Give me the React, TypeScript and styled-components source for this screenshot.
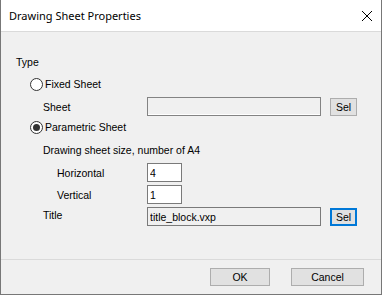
import styled, { createGlobalStyle } from 'styled-components';

const Global = createGlobalStyle`
    html, body {
        margin: 0;
        padding: 0;
        background: #ffffff;
    }
    * {
        box-sizing: border-box;
    }
`;

function CloseIcon() {
    return (
        <svg width="12" height="12" viewBox="0 0 12 12">
            <path d="M1 1 L11 11 M11 1 L1 11" stroke="#000" strokeWidth="1" fill="none" />
        </svg>
    );
}

type RowProps = { $top: number; $indent: number; $h?: number };

function App() {
    return (
        <>
            <Global />
            <Window>
                <TitleBar>
                    <span>Drawing Sheet Properties</span>
                    <CloseBtn>
                        <CloseIcon />
                    </CloseBtn>
                </TitleBar>
                <Body>
                    <Row $top={23} $indent={15}>
                        <Text>Type</Text>
                    </Row>
                    <Row $top={8} $indent={29}>
                        <Radio />
                        <RadioLabel>Fixed Sheet</RadioLabel>
                    </Row>
                    <Row $top={6} $indent={42} $h={19}>
                        <Label $w={104}>Sheet</Label>
                        <Field $w={174} $disabled value="" readOnly />
                        <SelButton $focused={false}>Sel</SelButton>
                    </Row>
                    <Row $top={4} $indent={29}>
                        <Radio $checked />
                        <RadioLabel>Parametric Sheet</RadioLabel>
                    </Row>
                    <Row $top={9} $indent={42}>
                        <Text>Drawing sheet size, number of A4</Text>
                    </Row>
                    <Row $top={6} $indent={56} $h={19}>
                        <Label $w={90}>Horizontal</Label>
                        <Field $w={35} value="4" readOnly />
                    </Row>
                    <Row $top={3} $indent={56} $h={19}>
                        <Label $w={90}>Vertical</Label>
                        <Field $w={35} value="1" readOnly />
                    </Row>
                    <Row $top={3} $indent={42} $h={19}>
                        <Label $w={104} $raise>Title</Label>
                        <Field $w={174} $grey value="title_block.vxp" readOnly />
                        <SelButton $focused>Sel</SelButton>
                    </Row>
                </Body>
                <Footer>
                    <Button $w={60}>OK</Button>
                    <Button $w={73}>Cancel</Button>
                </Footer>
            </Window>
        </>
    );
}

const Window = styled.div`
    width: 382px;
    height: 295px;
    border: 1px solid #777777;
    border-top: none;
    background: #f0f0f0;
    display: flex;
    flex-direction: column;
    font-family: 'Liberation Sans', Arial, sans-serif;
    font-size: 10.5px;
    color: #000000;
`;

const TitleBar = styled.div`
    height: 32px;
    background: #ffffff;
    border-bottom: 1px solid #dadada;
    display: flex;
    align-items: center;
    justify-content: space-between;
    padding: 0 8px 0 8px;
    font-family: 'Noto Sans', 'Open Sans', sans-serif;
    font-size: 11px;
    span {
        margin-top: -1px;
    }
`;

const CloseBtn = styled.div`
    width: 12px;
    height: 12px;
    display: flex;
    svg {
        display: block;
    }
`;

const Body = styled.div`
    flex: 1;
    display: flex;
    flex-direction: column;
`;

const Row = styled.div<RowProps>`
    display: flex;
    align-items: center;
    height: ${p => p.$h ?? 14}px;
    margin-top: ${p => p.$top}px;
    padding-left: ${p => p.$indent}px;
`;

const Text = styled.span`
    white-space: nowrap;
`;

const Label = styled.span<{ $w: number; $raise?: boolean }>`
    width: ${p => p.$w}px;
    white-space: nowrap;
    margin-top: ${p => (p.$raise ? -3 : 0)}px;
`;

const Radio = styled.span<{ $checked?: boolean }>`
    width: 13px;
    height: 13px;
    border-radius: 50%;
    border: 1px solid #333333;
    background: #ffffff;
    display: flex;
    align-items: center;
    justify-content: center;
    &::after {
        content: '';
        width: 7px;
        height: 7px;
        border-radius: 50%;
        background: #333333;
        display: ${p => (p.$checked ? 'block' : 'none')};
    }
`;

const RadioLabel = styled.span`
    margin-left: 2px;
    white-space: nowrap;
`;

const Field = styled.input<{ $w: number; $disabled?: boolean; $grey?: boolean }>`
    width: ${p => p.$w}px;
    height: 19px;
    border: 1px solid ${p => (p.$disabled ? '#838383' : '#7a7a7a')};
    background: ${p => (p.$disabled || p.$grey ? '#f0f0f0' : '#ffffff')};
    box-shadow: ${p => (p.$disabled ? 'inset 0 -1px 0 #ffffff' : 'none')};
    font-family: 'Liberation Sans', Arial, sans-serif;
    font-size: 10.5px;
    color: #000000;
    padding: 0 2px;
    margin: 0;
    outline: none;
`;

const SelButton = styled.button<{ $focused: boolean }>`
    width: 27px;
    height: 18px;
    margin-left: 9px;
    padding: 0;
    border: ${p => (p.$focused ? '2px solid #0078d7' : '1px solid #adadad')};
    background: #e1e1e1;
    font-family: 'Liberation Sans', Arial, sans-serif;
    font-size: 10.5px;
    color: #000000;
`;

const Footer = styled.div`
    height: 35px;
    border-top: 1px solid #dadada;
    display: flex;
    justify-content: flex-end;
    align-items: flex-start;
    gap: 21px;
    padding: 8px 17px 0 0;
`;

const Button = styled.button<{ $w: number }>`
    width: ${p => p.$w}px;
    height: 18px;
    padding: 0;
    border: 1px solid #adadad;
    background: #e1e1e1;
    font-family: 'Liberation Sans', Arial, sans-serif;
    font-size: 10.5px;
    color: #000000;
`;

export default App;
